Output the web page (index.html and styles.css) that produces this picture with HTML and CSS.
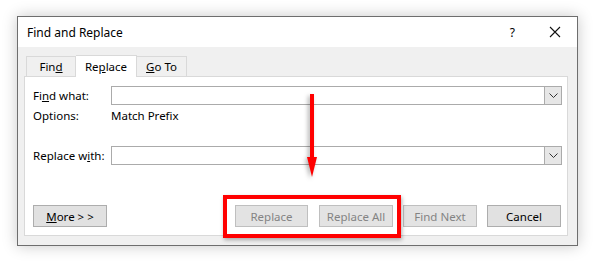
FILE: index.html
```html
<!DOCTYPE html>
<html lang="en">
<head>
  <meta charset="UTF-8" />
  <title>Find and Replace</title>
  <link rel="stylesheet" href="styles.css">
</head>
<body>
  <div class="dialog">
    <div class="title-bar">
      <span class="title">Find and Replace</span>
      <span class="help">?</span>
      <svg class="close" width="12" height="12" viewBox="0 0 12 12">
        <path d="M1 1 L11 11 M11 1 L1 11" stroke="#111" stroke-width="1.1" fill="none"/>
      </svg>
    </div>

    <div class="body">
      <div class="tabs">
        <div class="tab">Fin<u>d</u></div>
        <div class="tab active">Re<u>p</u>lace</div>
        <div class="tab"><u>G</u>o To</div>
      </div>

      <div class="panel">
        <div class="row">
          <label class="label">Fi<u>n</u>d what:</label>
          <div class="combo"><div class="drop"><svg width="9" height="5" viewBox="0 0 9 5"><path d="M0.5 0.5 L4.5 4.5 L8.5 0.5" stroke="#333" fill="none"/></svg></div></div>
        </div>
        <div class="row options">
          <span class="label">Options:</span>
          <span>Match Prefix</span>
        </div>
        <div class="row replace-row">
          <label class="label">Replace w<u>i</u>th:</label>
          <div class="combo"><div class="drop"><svg width="9" height="5" viewBox="0 0 9 5"><path d="M0.5 0.5 L4.5 4.5 L8.5 0.5" stroke="#333" fill="none"/></svg></div></div>
        </div>

        <div class="buttons">
          <button class="btn"><u>M</u>ore &gt; &gt;</button>
          <div class="spacer"></div>
          <button class="btn replace" disabled>Replace</button>
          <button class="btn" disabled>Replace All</button>
          <button class="btn" disabled>Find Next</button>
          <button class="btn">Cancel</button>
        </div>
      </div>
    </div>
  </div>

  <div class="highlight"></div>
  <svg class="arrow" width="14" height="86" viewBox="0 0 14 86">
    <rect x="4" y="0" width="4" height="66" fill="#ff0000"/>
    <polygon points="1,63 11,63 6,83" fill="#ff0000"/>
  </svg>
</body>
</html>
```

FILE: styles.css
```css
* {
  margin: 0;
  padding: 0;
  box-sizing: border-box;
}

body {
  width: 594px;
  height: 262px;
  background: #fff;
  font-family: 'Segoe UI', 'Noto Sans', sans-serif;
  font-size: 11.5px;
  color: #000;
  position: relative;
  overflow: hidden;
  padding: 16px 0 0 17px;
}

.dialog {
  width: 561px;
  height: 230px;
  border: 1px solid #6e6e6e;
  background: #f0f0f0;
  box-shadow: 0 0 14px rgba(0, 0, 0, 0.22);
  display: flex;
  flex-direction: column;
}

.title-bar {
  height: 30px;
  background: #fff;
  display: flex;
  align-items: center;
  padding-left: 9px;
}

.title {
  flex: 1;
  font-size: 12px;
}

.help {
  margin-right: 34px;
  font-size: 12px;
}

.close {
  margin-right: 16px;
}

.body {
  padding: 6px 9px 9px 6px;
  flex: 1;
  display: flex;
  flex-direction: column;
}

.tabs {
  display: flex;
  padding-left: 2px;
  height: 23px;
  align-items: flex-end;
}

.tab {
  width: 50px;
  height: 20px;
  border: 1px solid #d9d9d9;
  border-bottom: none;
  background: #f0f0f0;
  display: flex;
  align-items: center;
  justify-content: center;
}

.tab.active {
  width: 61px;
  height: 22px;
  background: #fff;
  margin-bottom: -1px;
  position: relative;
}

.tab + .tab {
  border-left: none;
}

.panel {
  flex: 1;
  background: #fff;
  border: 1px solid #d9d9d9;
  padding: 9px 5px 8px 8px;
  display: flex;
  flex-direction: column;
}

.row {
  display: flex;
  align-items: center;
  height: 19px;
}

.label {
  width: 78px;
}

.options {
  height: 21px;
}

.replace-row {
  margin-top: 20px;
}

.combo {
  flex: 1;
  height: 19px;
  border: 1px solid #ababab;
  display: flex;
  justify-content: flex-end;
}

.drop {
  width: 17px;
  background: #e6e6e6;
  border-left: 1px solid #ababab;
  display: flex;
  align-items: center;
  justify-content: center;
}

.buttons {
  margin-top: auto;
  display: flex;
  gap: 10px;
  padding-right: 1px;
}

.spacer {
  flex: 1;
}

.btn {
  width: 74px;
  height: 22px;
  background: #e1e1e1;
  border: 1px solid #adadad;
  font-family: inherit;
  font-size: 11.5px;
  color: #000;
}

.btn.replace {
  width: 73px;
  margin-right: 1px;
}

.btn:disabled {
  color: #838383;
  background: #e3e3e3;
  border-color: #bfbfbf;
}

.highlight {
  position: absolute;
  left: 223px;
  top: 195px;
  width: 178px;
  height: 43px;
  border: 4px solid #ff0000;
  box-shadow: 1px 2px 4px rgba(0, 0, 0, 0.3);
}

.arrow {
  position: absolute;
  left: 306px;
  top: 94px;
  filter: drop-shadow(-2px 2px 2px rgba(0, 0, 0, 0.3));
}
```
